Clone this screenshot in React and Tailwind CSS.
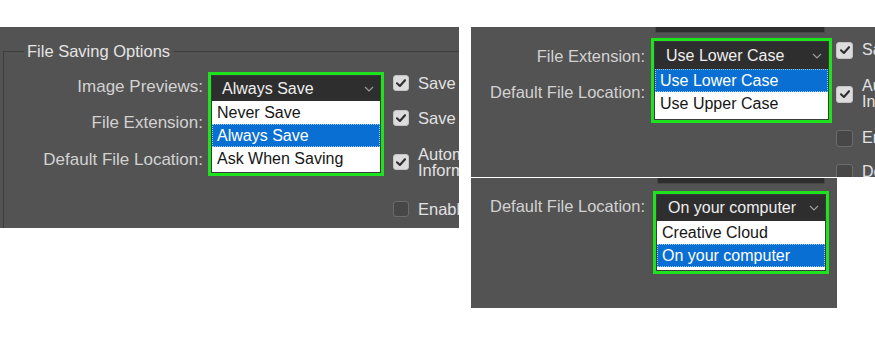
import React from 'react';

// Three cropped captures of Photoshop's File Handling preferences, laid side by side.

const font = "font-['Liberation_Sans',Arial,sans-serif]";

function Chevron() {
    return (
        <svg width="10" height="6" viewBox="0 0 10 6" className="shrink-0">
            <polyline points="1,1 5,5 9,1" fill="none" stroke="#9c9c9c" strokeWidth="1.2" />
        </svg>
    );
}

function Checkbox({ checked, size = 16 }) {
    if (!checked) {
        return <div className="shrink-0 rounded-[3px] bg-[#474747] border border-[#6c6c6c]" style={{ width: size, height: size }} />;
    }
    return (
        <div className="shrink-0 rounded-[3px] bg-[#dcdcdc] border border-[#c4c4c4] flex items-center justify-center" style={{ width: size, height: size }}>
            <svg width="12" height="12" viewBox="0 0 12 12">
                <path d="M2 6.3 L4.9 9 L10 3.2" fill="none" stroke="#2e2e2e" strokeWidth="2.1" strokeLinecap="round" strokeLinejoin="round" />
            </svg>
        </div>
    );
}

// select opened, framed by the green highlight
function OpenSelect({ value, options, selected, width, headerH, headerPad, bottomPad = 2 }) {
    return (
        <div className="shrink-0 border-[3px] border-[#1fe21f]" style={{ width }}>
            <div className="border border-[#3a3a3a] bg-white">
                <div className="flex items-center justify-between bg-[#2e2e2e] pr-[6px] text-[16px] text-[#efefef]" style={{ height: headerH, paddingLeft: headerPad }}>
                    <span className="whitespace-nowrap">{value}</span>
                    <Chevron />
                </div>
                <div style={{ paddingBottom: bottomPad }}>
                    {options.map((opt) => (
                        <div
                            key={opt}
                            className={
                                opt === selected
                                    ? 'h-[23px] flex items-center px-[5px] text-[16px] bg-[#0a6fd2] text-white outline-1 outline-dotted outline-[#9cc3ec] -outline-offset-1'
                                    : 'h-[23px] flex items-center px-[5px] text-[16px] text-[#161616]'
                            }
                        >
                            {opt}
                        </div>
                    ))}
                </div>
            </div>
        </div>
    );
}

function CheckRow({ checked, lines, mt, h, size, gap, textSize = 16 }) {
    return (
        <div className="flex items-center whitespace-nowrap" style={{ marginTop: mt, height: h, gap }}>
            <Checkbox checked={checked} size={size} />
            <div className="leading-[16px] text-[#e2e2e2]" style={{ fontSize: textSize }}>
                {lines.map((l) => (
                    <div key={l}>{l}</div>
                ))}
            </div>
        </div>
    );
}

function FirstPanel() {
    return (
        <div className={`w-[459px] h-[201px] shrink-0 bg-[#535353] overflow-hidden ${font}`}>
            <fieldset className="mt-[14px] ml-[3px] w-[456px] min-w-0 h-[240px] border-t border-l border-[#3e3e3e]">
                <legend className="ml-[20px] px-[3px] h-[20px] leading-[20px] text-[16.5px] text-[#e4e4e4]">File Saving Options</legend>
                <div className="flex">
                    <div className="w-[199px] shrink-0 pt-[7px] text-right text-[17px] text-[#d2d2d2]">
                        <div className="h-[36.5px] flex items-center justify-end">Image Previews:</div>
                        <div className="h-[36.5px] flex items-center justify-end">File Extension:</div>
                        <div className="h-[36.5px] flex items-center justify-end">Default File Location:</div>
                    </div>
                    <div className="ml-[5px] mt-[11px]">
                        <OpenSelect
                            value="Always Save"
                            options={['Never Save', 'Always Save', 'Ask When Saving']}
                            selected="Always Save"
                            width={176}
                            headerH={25}
                            headerPad={10}
                            bottomPad={2}
                        />
                    </div>
                    <div className="ml-[9px] shrink-0">
                        <CheckRow checked lines={['Save As to Original Folder']} mt={12} h={20} size={16} gap={9} textSize={16.5} />
                        <CheckRow checked lines={['Save in Background']} mt={15} h={20} size={16} gap={9} textSize={16.5} />
                        <CheckRow checked lines={['Automatically Save Recovery', 'Information Every:']} mt={18} h={32} size={16} gap={9} textSize={16.5} />
                        <CheckRow checked={false} lines={['Enable legacy “Save As”']} mt={21} h={20} size={16} gap={9} textSize={16.5} />
                    </div>
                </div>
            </fieldset>
        </div>
    );
}

function SecondPanel() {
    return (
        <div className={`w-[404px] h-[150px] bg-[#535353] overflow-hidden ${font}`}>
            <div className="ml-[184px] w-[170px] h-[6px] bg-[#2e2e2e] border-x border-b border-[#474747]" />
            <div className="flex">
                <div className="w-[174px] shrink-0 mt-[5px] text-right text-[16.5px] text-[#d2d2d2]">
                    <div className="h-[36px] flex items-center justify-end">File Extension:</div>
                    <div className="h-[36px] flex items-center justify-end">Default File Location:</div>
                </div>
                <div className="ml-[6px] mt-[5px]">
                    <OpenSelect
                        value="Use Lower Case"
                        options={['Use Lower Case', 'Use Upper Case']}
                        selected="Use Lower Case"
                        width={181}
                        headerH={27}
                        headerPad={11}
                        bottomPad={4}
                    />
                </div>
                <div className="ml-[4px] shrink-0">
                    <CheckRow checked lines={['Save in Background']} mt={7} h={20} size={17} gap={9} />
                    <CheckRow checked lines={['Automatically Save Recovery', 'Information Every:']} mt={18} h={32} size={17} gap={9} />
                    <CheckRow checked={false} lines={['Enable legacy “Save As”']} mt={18} h={20} size={17} gap={9} />
                    <CheckRow checked={false} lines={['Do not append “copy”']} mt={14} h={20} size={17} gap={9} />
                </div>
            </div>
        </div>
    );
}

function ThirdPanel() {
    return (
        <div className={`w-[366px] h-[130px] bg-[#535353] overflow-hidden ${font}`}>
            <div className="ml-[186px] w-[168px] h-[6px] bg-[#2e2e2e] border-x border-b border-[#474747]" />
            <div className="flex">
                <div className="w-[174px] shrink-0 mt-[4px] text-right text-[16.5px] text-[#d2d2d2]">
                    <div className="h-[36px] flex items-center justify-end">Default File Location:</div>
                </div>
                <div className="ml-[8px] mt-[7px]">
                    <OpenSelect
                        value="On your computer"
                        options={['Creative Cloud', 'On your computer']}
                        selected="On your computer"
                        width={176}
                        headerH={26}
                        headerPad={11}
                        bottomPad={3}
                    />
                </div>
            </div>
        </div>
    );
}

export default function App() {
    return (
        <div className="w-[875px] h-[341px] bg-white overflow-hidden flex items-start pt-[27px]">
            <FirstPanel />
            <div className="ml-[12px] flex flex-col gap-[1px]">
                <SecondPanel />
                <ThirdPanel />
            </div>
        </div>
    );
}
